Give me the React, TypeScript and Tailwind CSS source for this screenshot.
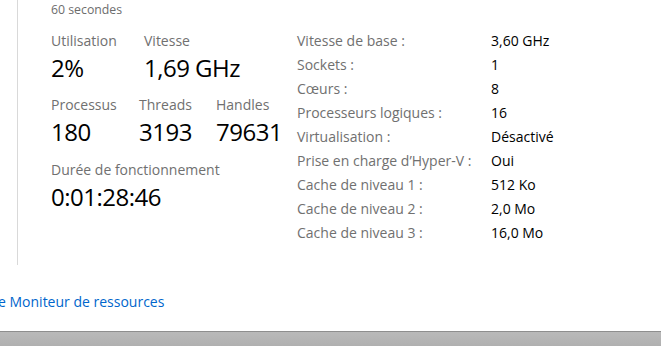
import React from 'react';

const specs: [string, string][] = [
  ['Vitesse de base :', '3,60 GHz'],
  ['Sockets :', '1'],
  ['Cœurs :', '8'],
  ['Processeurs logiques :', '16'],
  ['Virtualisation :', 'Désactivé'],
  ['Prise en charge d’Hyper-V :', 'Oui'],
  ['Cache de niveau 1 :', '512 Ko'],
  ['Cache de niveau 2 :', '2,0 Mo'],
  ['Cache de niveau 3 :', '16,0 Mo'],
];

function Stat({ label, value, className = '' }: { label: string; value: string; className?: string }) {
  return (
    <div className={className}>
      <div className="h-[20px] text-[14px] leading-[20px] whitespace-nowrap text-[#707070]">{label}</div>
      <div className="h-[34px] text-[24px] leading-[34px] tracking-[-0.5px] whitespace-nowrap text-black">
        {value}
      </div>
    </div>
  );
}

export default function App() {
  return (
    <div
      className="flex h-[346px] w-[661px] flex-col overflow-hidden bg-white"
      style={{ fontFamily: '"Open Sans", "Noto Sans", sans-serif' }}>
      {/* panneau CPU */}
      <div className="ml-[17px] flex h-[265px] border-l border-[#d9d9d9] pl-[33px]">
        {/* compteurs */}
        <div className="w-[246px]">
          <div className="h-[20px] text-[12.3px] leading-[20px] text-[#6d6d6d]">60 secondes</div>
          <div className="mt-[11px] flex">
            <Stat label="Utilisation" value="2%" className="w-[93px]" />
            <Stat label="Vitesse" value="1,69 GHz" />
          </div>
          <div className="mt-[10px] flex">
            <Stat label="Processus" value="180" className="w-[88px]" />
            <Stat label="Threads" value="3193" className="w-[77px]" />
            <Stat label="Handles" value="79631" />
          </div>
          <Stat label="Durée de fonctionnement" value="0:01:28:46" className="mt-[11px]" />
        </div>

        {/* caractéristiques */}
        <div className="mt-[28px]">
          {specs.map(([k, v]) => (
            <div key={k} className="flex h-[24px] items-center text-[14px] whitespace-nowrap">
              <span className="w-[194px] text-[#707070]">{k}</span>
              <span className="text-black">{v}</span>
            </div>
          ))}
        </div>
      </div>

      <div className="flex h-[66px] items-center pt-[6px]">
        <a className="-ml-[2px] text-[14px] whitespace-nowrap text-[#0066cc]" href="#">
          e Moniteur de ressources
        </a>
      </div>

      <div className="flex-1 border-t border-[#8e8e8e] bg-gradient-to-b from-[#b9b9b9] to-[#b0b0b0]" />
    </div>
  );
}
